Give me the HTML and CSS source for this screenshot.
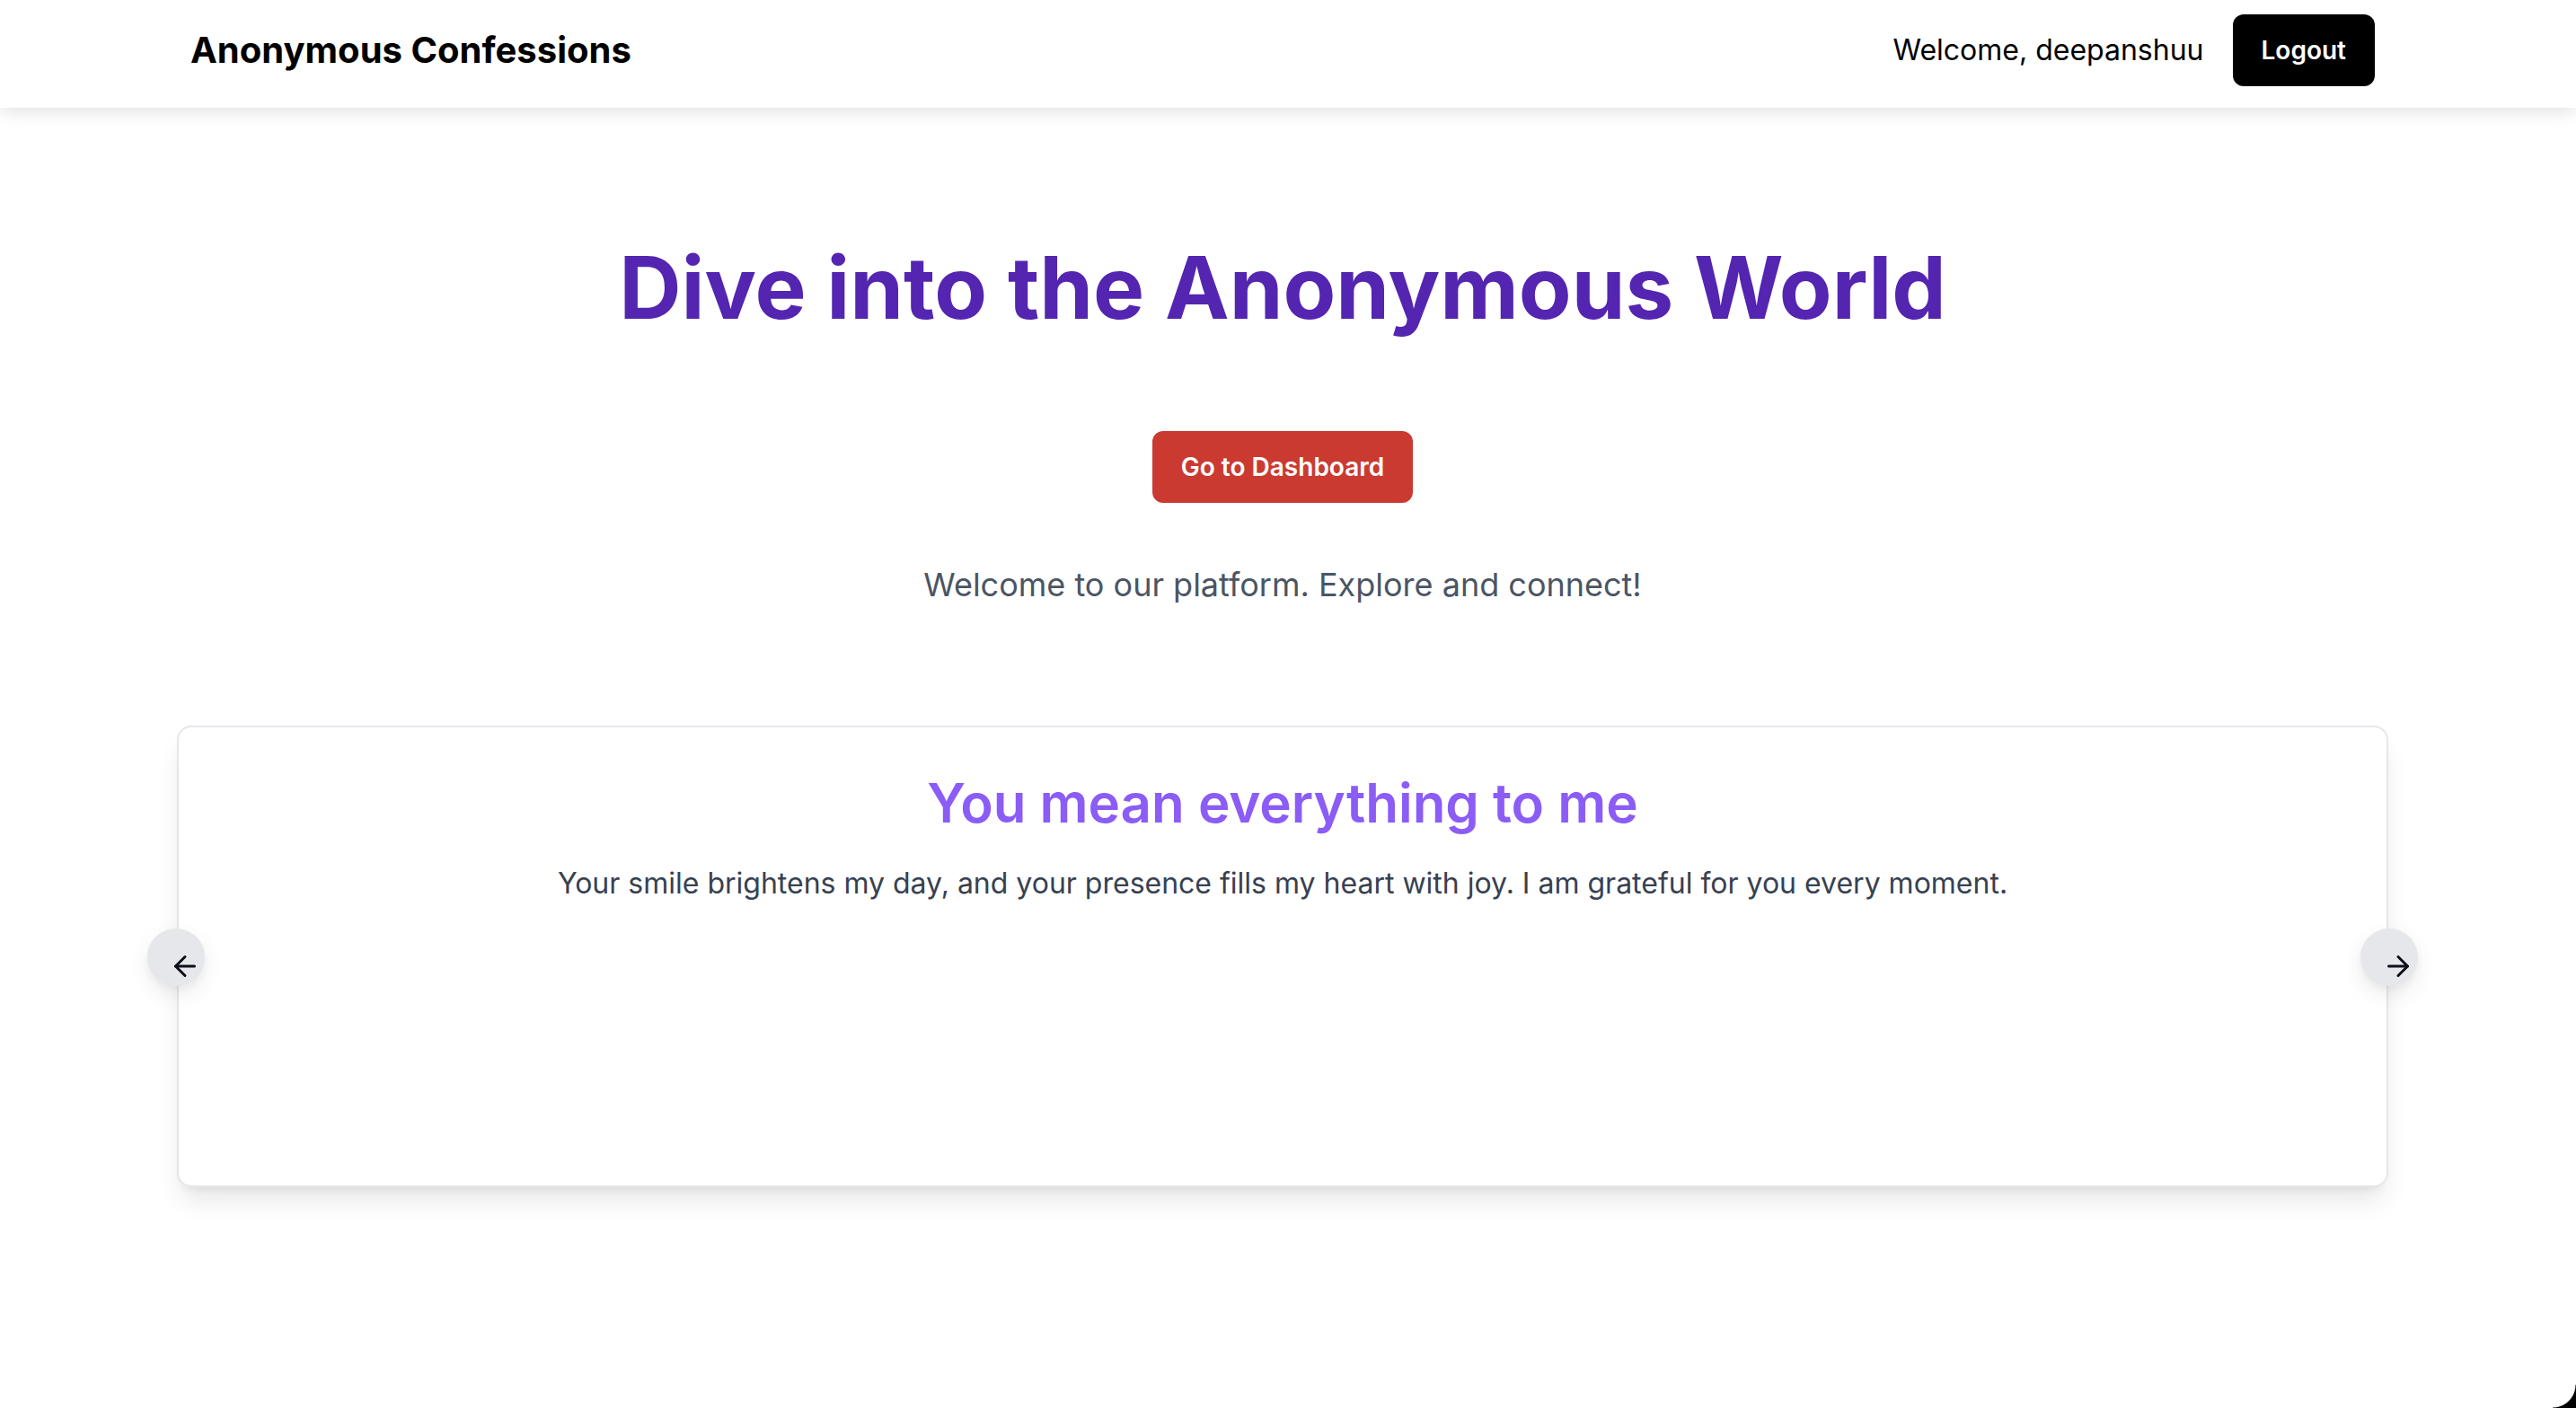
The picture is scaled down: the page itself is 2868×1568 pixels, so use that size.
FILE: index.html
```html
<!DOCTYPE html>
<html lang="en">
<head>
<meta charset="utf-8">
<title>Anonymous Confessions</title>
<link rel="stylesheet" href="styles.css">
</head>
<body>
<header class="topbar">
  <div class="brand">Anonymous Confessions</div>
  <div class="user">
    <span class="welcome">Welcome, deepanshuu</span>
    <button class="btn btn-dark">Logout</button>
  </div>
</header>
<main class="hero">
  <h1 class="hero-title">Dive into the Anonymous World</h1>
  <button class="btn btn-red">Go to Dashboard</button>
  <p class="hero-sub">Welcome to our platform. Explore and connect!</p>
  <section class="carousel">
    <div class="card">
      <h2 class="card-title">You mean everything to me</h2>
      <p class="card-text">Your smile brightens my day, and your presence fills my heart with joy. I am grateful for you every moment.</p>
    </div>
    <button class="nav nav-prev" aria-label="Previous slide">
      <svg viewBox="0 0 24 24" width="36" height="36" fill="none" stroke="currentColor" stroke-width="2" stroke-linecap="round" stroke-linejoin="round"><path d="m12 19-7-7 7-7"/><path d="M19 12H5"/></svg>
    </button>
    <button class="nav nav-next" aria-label="Next slide">
      <svg viewBox="0 0 24 24" width="36" height="36" fill="none" stroke="currentColor" stroke-width="2" stroke-linecap="round" stroke-linejoin="round"><path d="M5 12h14"/><path d="m12 5 7 7-7 7"/></svg>
    </button>
  </section>
</main>
<div class="corner"></div>
</body>
</html>
```
FILE: styles.css
```css
* { box-sizing: border-box; }
html, body { margin: 0; padding: 0; background: #fff; }
body {
  font-family: Inter, "Noto Sans", "Liberation Sans", sans-serif;
  color: #000;
  min-height: 1568px;
}
.topbar {
  height: 120px;
  display: flex;
  align-items: center;
  justify-content: space-between;
  padding: 0 224px 9px 212px;
  background: #fff;
  box-shadow: 0 4px 18px rgba(0, 0, 0, 0.12);
  position: relative;
  z-index: 2;
}
.brand {
  font-size: 40px;
  font-weight: 700;
}
.user {
  display: flex;
  align-items: center;
  gap: 32px;
}
.welcome {
  font-size: 32px;
}
.btn {
  font-family: inherit;
  border: none;
  height: 80px;
  padding: 0 32px;
  border-radius: 12px;
  font-size: 28px;
  font-weight: 600;
  color: #fff;
  cursor: pointer;
}
.btn-dark { background: #000; }
.btn-red { background: #ca3a31; margin-top: 112px; }
.hero {
  padding: 152px 12px 0 0;
  text-align: center;
  display: flex;
  flex-direction: column;
  align-items: center;
}
.hero-title {
  margin: 0;
  font-size: 96px;
  line-height: 96px;
  font-weight: 700;
  color: #5425b0;
}
.hero-sub {
  margin: 63px 0 0;
  font-size: 36px;
  line-height: 56px;
  color: #4b5563;
}
.carousel {
  position: relative;
  margin-top: 129px;
  width: 2462px;
}
.card {
  height: 514px;
  border: 2px solid #e5e7eb;
  border-radius: 16px;
  background: #fff;
  padding: 48px;
  box-shadow: 0 20px 30px -6px rgba(0, 0, 0, 0.1), 0 8px 12px -8px rgba(0, 0, 0, 0.1);
}
.card-title {
  margin: 0 0 30px;
  font-size: 60px;
  line-height: 72px;
  font-weight: 600;
  color: #8b5cf6;
}
.card-text {
  margin: 0;
  font-size: 32px;
  line-height: 48px;
  color: #374151;
}
.nav {
  position: absolute;
  top: 226px;
  width: 64px;
  height: 64px;
  border-radius: 50%;
  border: none;
  background: #e5e7eb;
  color: #0b0f19;
  padding: 0;
  display: flex;
  align-items: center;
  justify-content: center;
  box-shadow: 0 10px 24px rgba(0, 0, 0, 0.08), 0 4px 8px rgba(0, 0, 0, 0.04);
}
.nav svg { transform: translate(10px, 10px); }
.nav-prev { left: -33px; }
.nav-next { right: -33px; }
.corner {
  position: fixed;
  right: 0;
  bottom: 0;
  width: 26px;
  height: 26px;
  background: radial-gradient(circle at 0 0, transparent 25px, #000 26px);
}
```
